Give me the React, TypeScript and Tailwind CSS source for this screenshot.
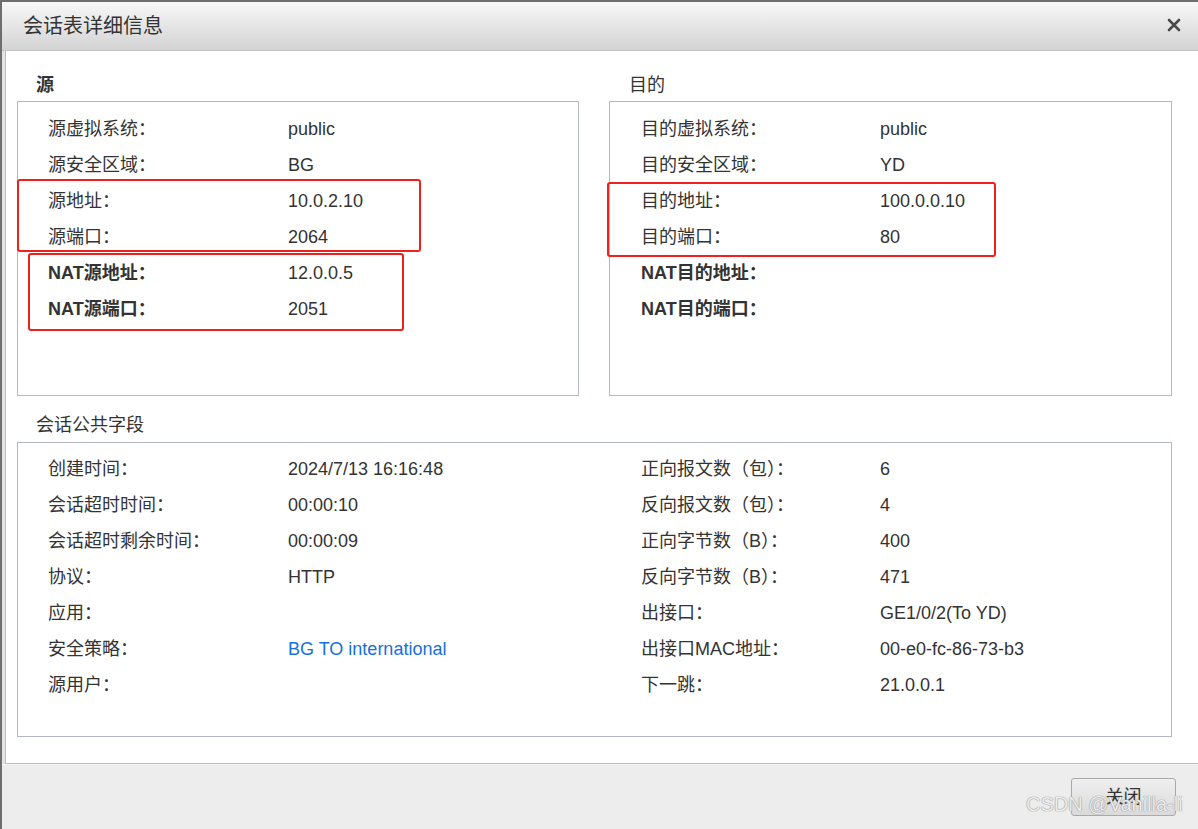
const sourceRows = [
  { label: "源虚拟系统：", value: "public" },
  { label: "源安全区域：", value: "BG" },
  { label: "源地址：", value: "10.0.2.10" },
  { label: "源端口：", value: "2064" },
  { label: "NAT源地址：", value: "12.0.0.5", bold: true },
  { label: "NAT源端口：", value: "2051", bold: true },
];

const destRows = [
  { label: "目的虚拟系统：", value: "public" },
  { label: "目的安全区域：", value: "YD" },
  { label: "目的地址：", value: "100.0.0.10" },
  { label: "目的端口：", value: "80" },
  { label: "NAT目的地址：", value: "", bold: true },
  { label: "NAT目的端口：", value: "", bold: true },
];

const commonRows = [
  { l: "创建时间：", v: "2024/7/13 16:16:48", rl: "正向报文数（包）：", rv: "6" },
  { l: "会话超时时间：", v: "00:00:10", rl: "反向报文数（包）：", rv: "4" },
  { l: "会话超时剩余时间：", v: "00:00:09", rl: "正向字节数（B）：", rv: "400" },
  { l: "协议：", v: "HTTP", rl: "反向字节数（B）：", rv: "471" },
  { l: "应用：", v: "", rl: "出接口：", rv: "GE1/0/2(To YD)" },
  { l: "安全策略：", v: "BG TO international", link: true, rl: "出接口MAC地址：", rv: "00-e0-fc-86-73-b3" },
  { l: "源用户：", v: "", rl: "下一跳：", rv: "21.0.0.1" },
];

type Row = { label: string; value: string; bold?: boolean };

function FieldList({ rows, pl, lw }: { rows: Row[]; pl: string; lw: string }) {
  return (
    <div className={`pt-[9px] ${pl}`}>
      {rows.map((r) => (
        <div key={r.label} className="flex h-[36px] items-center">
          <div className={`${lw} shrink-0 ${r.bold ? "font-bold" : ""}`}>{r.label}</div>
          <div>{r.value}</div>
        </div>
      ))}
    </div>
  );
}

export default function App() {
  return (
    <div className="relative w-[1198px] h-[829px] overflow-hidden bg-[#ececec] border-l-2 border-t-2 border-[#6e6e6e] flex flex-col text-[18px] text-[#333] font-['Liberation_Sans','Noto_Sans_CJK_SC',sans-serif]">
      {/* title bar */}
      <div className="h-[49px] shrink-0 flex items-center justify-between pl-[21px] pr-[17px] bg-gradient-to-b from-[#f8f8f8] to-[#d3d3d3] border-b border-[#c4c4c4]">
        <span className="text-[20px] text-[#333]">会话表详细信息</span>
        <svg width="14" height="14" viewBox="0 0 14 14" className="mt-[-2px]">
          <path d="M2 2 L12 12 M12 2 L2 12" stroke="#4a4a4a" strokeWidth="2.6" strokeLinecap="round" />
        </svg>
      </div>

      {/* content */}
      <div className="h-[713px] shrink-0 pl-[3px] bg-[#e4e4e4]">
        <div className="h-full bg-white border-l border-b border-[#bdbdbd] pl-[11px] pt-[18px]">
          <div className="flex gap-[30px]">
            <div className="w-[562px]">
              <div className="h-[32px] leading-[32px] pl-[19px] font-bold">源</div>
              <div className="h-[295px] border border-[#b4b7c9]">
                <FieldList rows={sourceRows} pl="pl-[30px]" lw="w-[240px]" />
              </div>
            </div>
            <div className="w-[563px]">
              <div className="h-[32px] leading-[32px] pl-[20px]">目的</div>
              <div className="h-[295px] border border-[#b4b7c9]">
                <FieldList rows={destRows} pl="pl-[31px]" lw="w-[239px]" />
              </div>
            </div>
          </div>

          <div className="h-[34px] mt-[12px] leading-[34px] pl-[19px]">会话公共字段</div>
          <div className="w-[1155px] h-[295px] border border-[#b4b7c9] pt-[8px] pl-[30px]">
            {commonRows.map((r) => (
              <div key={r.l} className="flex h-[36px] items-center">
                <div className="w-[240px] shrink-0">{r.l}</div>
                <div className={`w-[353px] shrink-0 ${r.link ? "text-[#1670dc]" : ""}`}>{r.v}</div>
                <div className="w-[239px] shrink-0">{r.rl}</div>
                <div>{r.rv}</div>
              </div>
            ))}
          </div>
        </div>
      </div>

      {/* footer */}
      <div className="flex-1 bg-[#ededed] border-t border-[#f6f6f6] flex justify-end items-start pt-[13px] pr-[22px]">
        <button className="w-[105px] h-[38px] rounded-[3px] border border-[#a9a9a9] bg-gradient-to-b from-[#efefef] to-[#dadada] text-[18px] text-[#333]">
          关闭
        </button>
      </div>

      {/* red annotation boxes */}
      <div className="absolute left-[15px] top-[177px] w-[404px] h-[73px] border-2 border-[#f0201c] rounded-[3px]" />
      <div className="absolute left-[26px] top-[251px] w-[376px] h-[78px] border-2 border-[#f0201c] rounded-[3px]" />
      <div className="absolute left-[605px] top-[180px] w-[389px] h-[75px] border-2 border-[#f0201c] rounded-[3px]" />

      {/* watermark */}
      <div className="absolute left-[1024px] top-[787px] text-[20px] text-[#ffffffd9] [text-shadow:0_0_1px_#8a8a8a,0_0_1px_#8a8a8a] font-['Liberation_Sans',sans-serif]">
        CSDN @Vanilla-li
      </div>
    </div>
  );
}
